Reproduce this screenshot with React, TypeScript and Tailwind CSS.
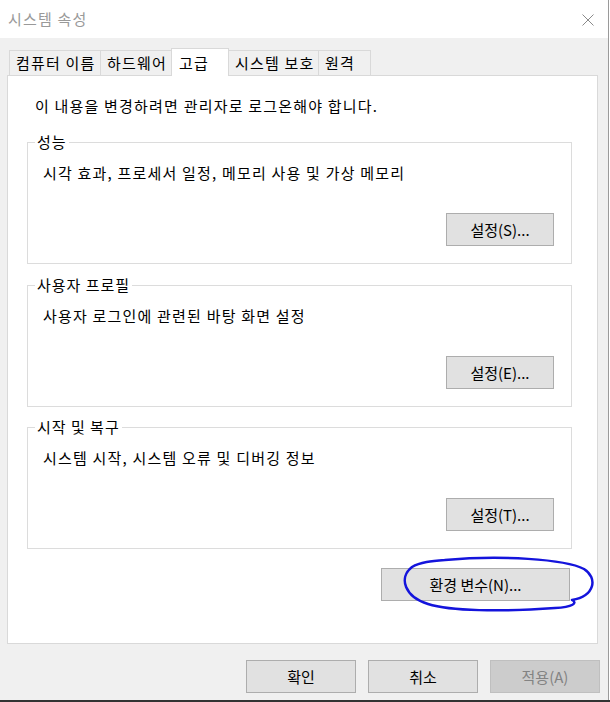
import type { ReactNode } from "react";

const FONT = { fontFamily: '"Noto Sans CJK KR", "Noto Sans", sans-serif' };

interface TabDef {
  label: string;
  width: string;
  active?: boolean;
}

const tabs: TabDef[] = [
  { label: "컴퓨터 이름", width: "w-[92px]" },
  { label: "하드웨어", width: "w-[72px]" },
  { label: "고급", width: "w-[58px]", active: true },
  { label: "시스템 보호", width: "w-[91px]" },
  { label: "원격", width: "w-[53px]" },
];

function Button({
  children,
  width,
  disabled,
}: {
  children: ReactNode;
  width: string;
  disabled?: boolean;
}) {
  return (
    <button
      type="button"
      disabled={disabled}
      className={
        disabled
          ? `${width} h-[33px] border border-[#bfbfbf] bg-[#cccccc] text-[15px] leading-[20px] text-[#838383]`
          : `${width} h-[33px] border border-[#adadad] bg-[#e1e1e1] text-[15px] leading-[20px] text-black`
      }
    >
      {children}
    </button>
  );
}

function Group({
  title,
  text,
  button,
  className,
}: {
  title: string;
  text: string;
  button: string;
  className?: string;
}) {
  return (
    <fieldset
      className={`ml-[19px] w-[545px] border border-[#dcdcdc] pb-[17px] pr-[17px] ${className ?? ""}`}
    >
      <legend className="ml-[7px] bg-white px-[2px] text-[15px] leading-[20px] tracking-[1px]">
        {title}
      </legend>
      <div className="mt-[11px] pl-[15px] text-[15px] leading-[20px] tracking-[1.2px]">
        {text}
      </div>
      <div className="mt-[30px] flex justify-end">
        <Button width="w-[108px]">{button}</Button>
      </div>
    </fieldset>
  );
}

export default function App() {
  return (
    <div
      className="relative flex h-[702px] w-[610px] flex-col overflow-hidden bg-white text-black"
      style={FONT}
    >
      <div className="flex flex-1">
        <div className="flex w-[608px] flex-col">
          {/* title bar */}
          <div className="flex h-[38px] items-center justify-between bg-white pl-[8px] pr-[14px]">
            <span className="text-[15px] leading-[20px] tracking-[1.2px] text-[#999999]">
              시스템 속성
            </span>
            <svg width="12" height="12" viewBox="0 0 12 12" className="mt-[1px]">
              <path d="M0.5 0.5 L11.5 11.5 M11.5 0.5 L0.5 11.5" stroke="#8a8a8a" strokeWidth="1" />
            </svg>
          </div>

          <div className="flex flex-1 flex-col bg-[#f0f0f0] pt-[10px]">
            {/* tabs */}
            <div className="relative z-10 ml-[9px] flex items-end">
              {tabs.map((tab, i) =>
                tab.active ? (
                  <div
                    key={tab.label}
                    className={`${tab.width} -mb-px -ml-px flex h-[28px] items-center border border-b-0 border-[#d9d9d9] bg-white pl-[7px] text-[15px] leading-[20px] tracking-[1.2px]`}
                  >
                    {tab.label}
                  </div>
                ) : (
                  <div
                    key={tab.label}
                    className={`${tab.width} ${i > 0 ? "-ml-px" : ""} flex h-[25px] items-center border border-b-0 border-[#d9d9d9] bg-[#f0f0f0] pl-[6px] text-[15px] leading-[20px] tracking-[1.2px]`}
                  >
                    {tab.label}
                  </div>
                )
              )}
            </div>

            {/* panel */}
            <div className="ml-[7px] h-[569px] w-[591px] border border-[#d9d9d9] bg-white pt-[20px]">
              <div className="pl-[27px] text-[15px] leading-[20px] tracking-[1.2px]">
                이 내용을 변경하려면 관리자로 로그온해야 합니다.
              </div>
              <Group
                className="mt-[16px]"
                title="성능"
                text="시각 효과, 프로세서 일정, 메모리 사용 및 가상 메모리"
                button="설정(S)..."
              />
              <Group
                className="mt-[11px]"
                title="사용자 프로필"
                text="사용자 로그인에 관련된 바탕 화면 설정"
                button="설정(E)..."
              />
              <Group
                className="mt-[10px]"
                title="시작 및 복구"
                text="시스템 시작, 시스템 오류 및 디버깅 정보"
                button="설정(T)..."
              />
              <div className="mt-[19px] ml-[19px] flex w-[545px] justify-end pr-[2px]">
                <Button width="w-[189px]">환경 변수(N)...</Button>
              </div>
            </div>

            {/* dialog buttons */}
            <div className="mt-[16px] flex justify-end gap-[12px] pr-[8px]">
              <Button width="w-[110px]">확인</Button>
              <Button width="w-[110px]">취소</Button>
              <Button width="w-[110px]" disabled>
                적용(A)
              </Button>
            </div>
          </div>
        </div>
        <div className="w-[2px] border-l border-[#9a9a9a] bg-white" />
      </div>
      <div className="h-[2px] bg-[#333333]" />

      {/* hand-drawn highlight */}
      <svg
        className="pointer-events-none absolute inset-0"
        width="610"
        height="702"
        viewBox="0 0 610 702"
        fill="none"
      >
        <path
          d="M445 560 C500 555, 565 559, 584 569 C598 578, 595 596, 572 600 C578 603, 573 607, 555 608 C500 612, 450 611, 428 604 C405 597, 398 578, 412 567 C420 562, 432 561, 445 560"
          stroke="#1414dc"
          strokeWidth="2.5"
          strokeLinecap="round"
          strokeLinejoin="round"
        />
      </svg>
    </div>
  );
}
